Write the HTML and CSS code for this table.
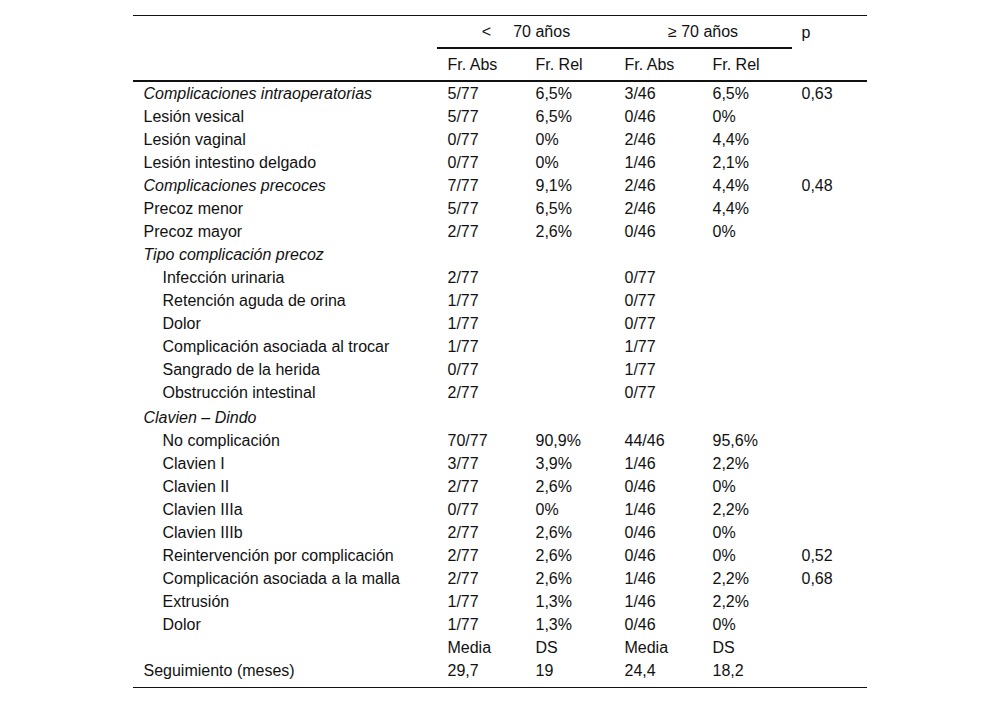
FILE: index.html
```html
<!DOCTYPE html>
<html lang="es">
<head>
<meta charset="utf-8">
<title>Complicaciones</title>
<link rel="stylesheet" href="styles.css">
</head>
<body>
<table class="tbl">
  <colgroup>
    <col class="c-label"><col class="c-num"><col class="c-num2"><col class="c-num"><col class="c-num2"><col class="c-p">
  </colgroup>
  <thead>
    <tr class="h1">
      <th></th>
      <th colspan="2" class="grp"><span class="lt">&lt;</span>70 años</th>
      <th colspan="2" class="grp">≥ 70 años</th>
      <th class="left">p</th>
    </tr>
    <tr class="h2">
      <th></th>
      <th class="left">Fr. Abs</th>
      <th class="left">Fr. Rel</th>
      <th class="left">Fr. Abs</th>
      <th class="left">Fr. Rel</th>
      <th></th>
    </tr>
  </thead>
  <tbody>
    <tr><td class="it">Complicaciones intraoperatorias</td><td>5/77</td><td>6,5%</td><td>3/46</td><td>6,5%</td><td>0,63</td></tr>
    <tr><td>Lesión vesical</td><td>5/77</td><td>6,5%</td><td>0/46</td><td>0%</td><td></td></tr>
    <tr><td>Lesión vaginal</td><td>0/77</td><td>0%</td><td>2/46</td><td>4,4%</td><td></td></tr>
    <tr><td>Lesión intestino delgado</td><td>0/77</td><td>0%</td><td>1/46</td><td>2,1%</td><td></td></tr>
    <tr><td class="it">Complicaciones precoces</td><td>7/77</td><td>9,1%</td><td>2/46</td><td>4,4%</td><td>0,48</td></tr>
    <tr><td>Precoz menor</td><td>5/77</td><td>6,5%</td><td>2/46</td><td>4,4%</td><td></td></tr>
    <tr><td>Precoz mayor</td><td>2/77</td><td>2,6%</td><td>0/46</td><td>0%</td><td></td></tr>
    <tr><td class="it">Tipo complicación precoz</td><td></td><td></td><td></td><td></td><td></td></tr>
    <tr><td class="ind">Infección urinaria</td><td>2/77</td><td></td><td>0/77</td><td></td><td></td></tr>
    <tr><td class="ind">Retención aguda de orina</td><td>1/77</td><td></td><td>0/77</td><td></td><td></td></tr>
    <tr><td class="ind">Dolor</td><td>1/77</td><td></td><td>0/77</td><td></td><td></td></tr>
    <tr><td class="ind">Complicación asociada al trocar</td><td>1/77</td><td></td><td>1/77</td><td></td><td></td></tr>
    <tr><td class="ind">Sangrado de la herida</td><td>0/77</td><td></td><td>1/77</td><td></td><td></td></tr>
    <tr><td class="ind">Obstrucción intestinal</td><td>2/77</td><td></td><td>0/77</td><td></td><td></td></tr>
    <tr class="tall"><td class="it">Clavien – Dindo</td><td></td><td></td><td></td><td></td><td></td></tr>
    <tr><td class="ind">No complicación</td><td>70/77</td><td>90,9%</td><td>44/46</td><td>95,6%</td><td></td></tr>
    <tr><td class="ind">Clavien I</td><td>3/77</td><td>3,9%</td><td>1/46</td><td>2,2%</td><td></td></tr>
    <tr><td class="ind">Clavien II</td><td>2/77</td><td>2,6%</td><td>0/46</td><td>0%</td><td></td></tr>
    <tr><td class="ind">Clavien IIIa</td><td>0/77</td><td>0%</td><td>1/46</td><td>2,2%</td><td></td></tr>
    <tr><td class="ind">Clavien IIIb</td><td>2/77</td><td>2,6%</td><td>0/46</td><td>0%</td><td></td></tr>
    <tr><td class="ind">Reintervención por complicación</td><td>2/77</td><td>2,6%</td><td>0/46</td><td>0%</td><td>0,52</td></tr>
    <tr><td class="ind">Complicación asociada a la malla</td><td>2/77</td><td>2,6%</td><td>1/46</td><td>2,2%</td><td>0,68</td></tr>
    <tr><td class="ind">Extrusión</td><td>1/77</td><td>1,3%</td><td>1/46</td><td>2,2%</td><td></td></tr>
    <tr><td class="ind">Dolor</td><td>1/77</td><td>1,3%</td><td>0/46</td><td>0%</td><td></td></tr>
    <tr><td></td><td>Media</td><td>DS</td><td>Media</td><td>DS</td><td></td></tr>
    <tr class="last"><td>Seguimiento (meses)</td><td>29,7</td><td>19</td><td>24,4</td><td>18,2</td><td></td></tr>
  </tbody>
</table>
</body>
</html>
```

FILE: styles.css
```css
html, body {
  margin: 0;
  padding: 0;
  background: #ffffff;
}
body {
  padding-top: 15px;
  font-family: "Liberation Sans", Arial, sans-serif;
  font-size: 16px;
  color: #111111;
}
.tbl {
  width: 733px;
  margin: 0 auto;
  border-collapse: separate;
  border-spacing: 0;
  border-top: 1px solid #111111;
  border-bottom: 1px solid #111111;
  table-layout: fixed;
}
.c-label { width: 304px; }
.c-num { width: 88px; }
.c-num2 { width: 89px; }
.c-p { width: 75px; }

.tbl th {
  font-weight: normal;
  padding: 0 0 0 10px;
  height: 31px;
  line-height: 31px;
  text-align: left;
  white-space: nowrap;
}
.tbl th.grp {
  text-align: center;
  padding: 0;
  border-bottom: 2px solid #111111;
}
.h2 th {
  border-bottom: 2px solid #111111;
}
.lt {
  margin-right: 22px;
}
.tbl td {
  padding: 0 0 0 10px;
  height: 23px;
  line-height: 23px;
  white-space: nowrap;
}
.tbl td.ind {
  padding-left: 29px;
}
.tbl td.it {
  font-style: italic;
}
.tbl .tall td {
  height: auto;
  padding-top: 2px;
}
.tbl .last td {
  padding-bottom: 5px;
}
```
